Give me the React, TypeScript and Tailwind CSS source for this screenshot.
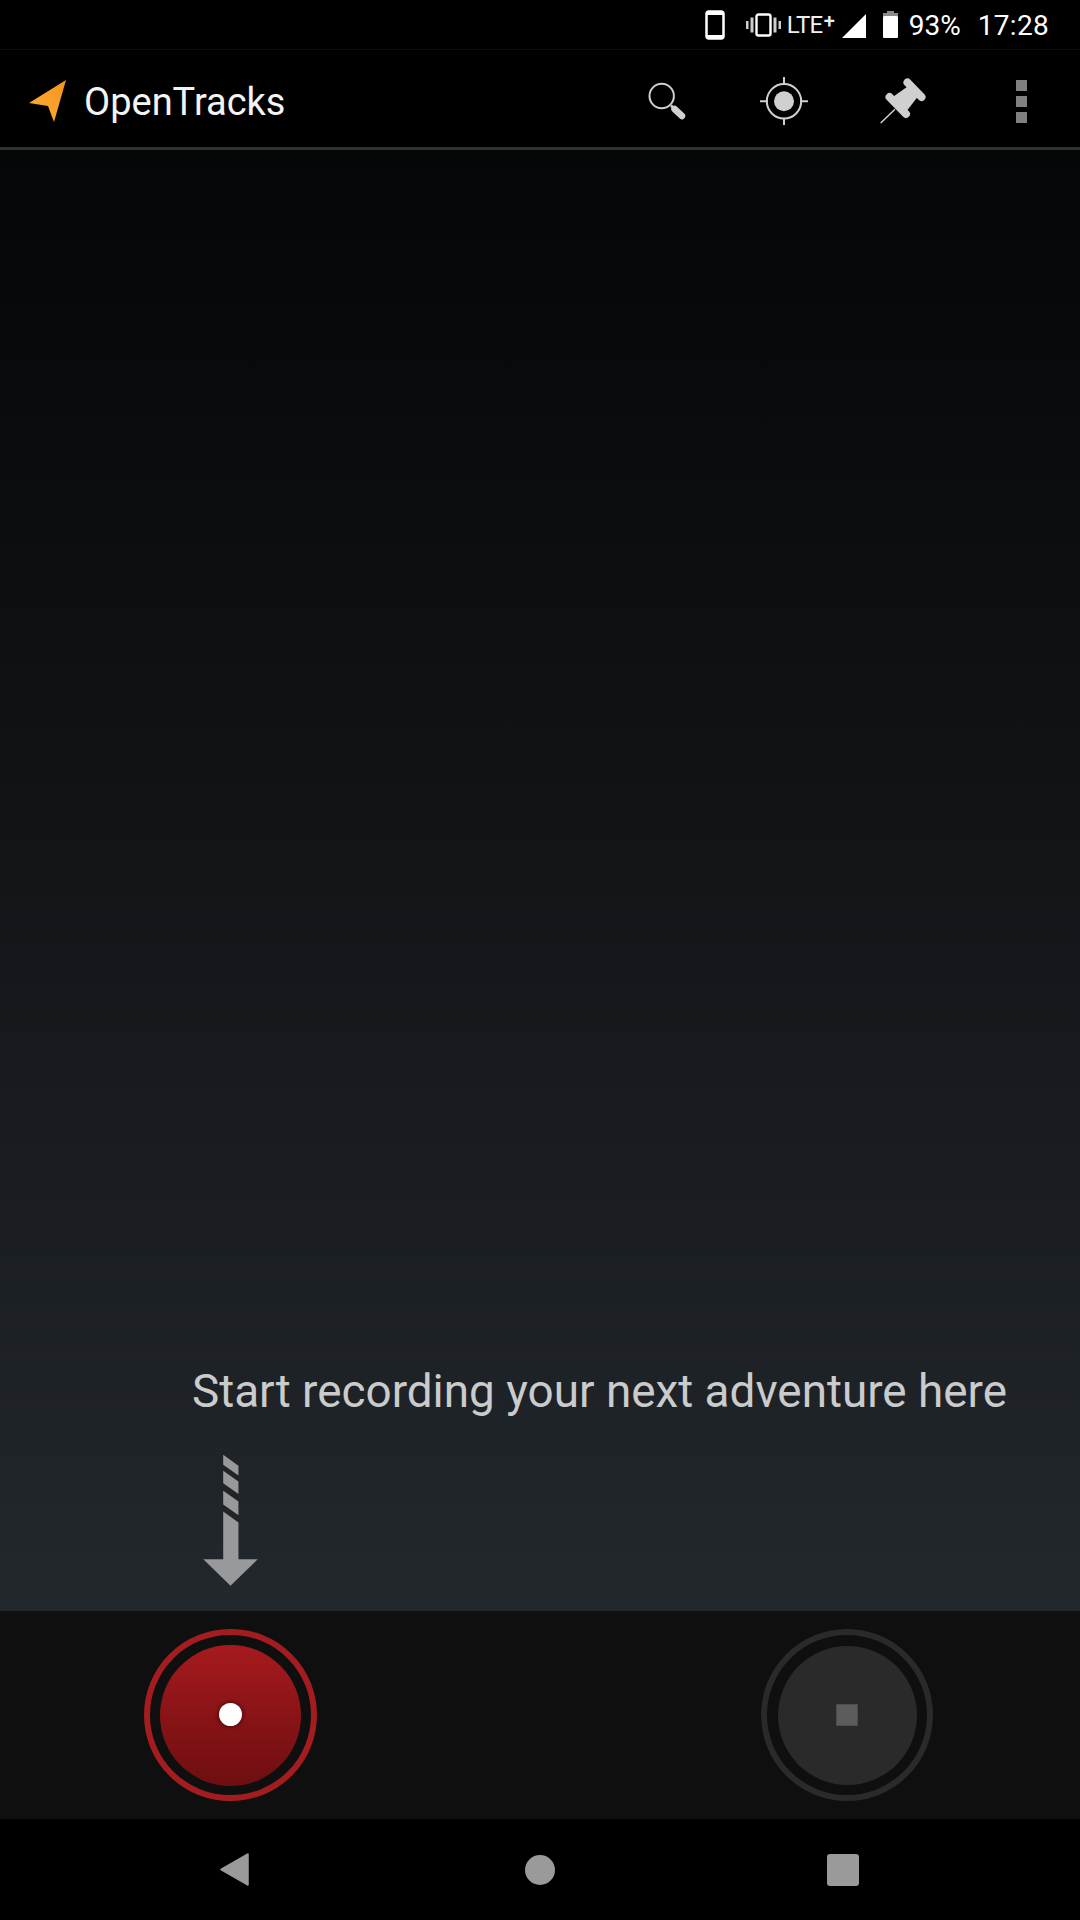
export default function App() {
  return (
    <div className="w-[1080px] h-[1920px] flex flex-col bg-black font-['Roboto',sans-serif] overflow-hidden">
      {/* Status bar */}
      <div className="h-[50px] flex items-center pr-[31px] text-white border-b border-[#0c0c0c]">
        <div className="ml-auto flex items-center">
          <svg width="20" height="30" viewBox="0 0 20 30">
            <rect x="1.5" y="1.5" width="17" height="27" rx="2.5" fill="none" stroke="#fff" strokeWidth="2.5" />
            <rect x="2" y="2" width="16" height="3" fill="#fff" />
            <rect x="2" y="25" width="16" height="3" fill="#fff" />
          </svg>
          <svg className="ml-[21px]" width="35" height="24" viewBox="0 0 35 24">
            <rect x="0" y="8" width="2.5" height="8" fill="#ccc" />
            <rect x="4.5" y="4.5" width="3" height="15" fill="#ccc" />
            <rect x="10.5" y="1.5" width="14" height="21" rx="2" fill="none" stroke="#fff" strokeWidth="2.4" />
            <rect x="27.5" y="4.5" width="3" height="15" fill="#ccc" />
            <rect x="32.5" y="8" width="2.5" height="8" fill="#ccc" />
          </svg>
          <span className="ml-[6px] w-[47px] flex items-start text-[24px] leading-none tracking-[-0.6px] mt-[1px] text-[#f0f0f0]">
            LTE
            <span className="ml-[1px] text-[20px] leading-[16px] font-medium">+</span>
          </span>
          <svg className="ml-[8px] mt-[2px]" width="24" height="24" viewBox="0 0 24 24">
            <polygon points="24,0 24,24 0,24" fill="#fff" />
          </svg>
          <svg className="ml-[17px]" width="15" height="27" viewBox="0 0 15 27">
            <rect x="4" y="0" width="7" height="3" fill="#8a8a8a" />
            <rect x="0" y="2" width="15" height="3" fill="#8a8a8a" />
            <rect x="0" y="5" width="15" height="22" rx="1" fill="#fff" />
          </svg>
          <span className="ml-[11px] mt-[3px] text-[28px] leading-none">93%</span>
          <span className="ml-[17px] mt-[3px] text-[28px] leading-none tracking-[0.3px]">17:28</span>
        </div>
      </div>

      {/* Action bar */}
      <div className="h-[97px] flex items-center pl-[29px] pr-[36px]">
        <svg className="mt-[6px]" width="38" height="43" viewBox="29 80 38 43">
          <defs>
            <linearGradient id="nav" x1="0" y1="1" x2="1" y2="0">
              <stop offset="0" stopColor="#fbb034" />
              <stop offset="1" stopColor="#f7931e" />
            </linearGradient>
          </defs>
          <polygon points="29,103 66,80 54,122 48,106" fill="url(#nav)" />
        </svg>
        <span className="ml-[17px] mt-[6px] text-[38px] leading-none text-[#f4f4f4]">OpenTracks</span>

        <div className="ml-auto flex items-center pt-[5px]">
          <svg width="48" height="48" viewBox="644 76 48 48">
            <circle cx="661.7" cy="95" r="12.2" fill="none" stroke="#d0d0d0" strokeWidth="2" />
            <line x1="671" y1="104.5" x2="674" y2="107.5" stroke="#d0d0d0" strokeWidth="2.5" />
            <line x1="674.5" y1="108" x2="682" y2="115" stroke="#d0d0d0" strokeWidth="6.5" strokeLinecap="round" />
          </svg>
          <svg className="ml-[68px]" width="48" height="48" viewBox="760 76 48 48">
            <circle cx="784" cy="100.3" r="17.2" fill="none" stroke="#d0d0d0" strokeWidth="2" />
            <circle cx="784" cy="100.3" r="10" fill="#d0d0d0" />
            <path d="M784 76v8M784 117v8M760 100.3h8M800 100.3h8" stroke="#d0d0d0" strokeWidth="2" />
          </svg>
          <svg className="ml-[70px]" width="48" height="48" viewBox="878 76 48 48">
            <line x1="895" y1="108.3" x2="880.7" y2="122" stroke="#d0d0d0" strokeWidth="1.5" />
            <polygon points="908.3,85 918.3,95 906.7,110 891.7,96.7" fill="#d0d0d0" />
            <line x1="907.5" y1="81.5" x2="921.5" y2="96" stroke="#d0d0d0" strokeWidth="8" strokeLinecap="round" />
            <line x1="889.5" y1="96" x2="906" y2="113" stroke="#d0d0d0" strokeWidth="8" strokeLinecap="round" />
          </svg>
          <div className="ml-[90px] flex flex-col gap-[5px] mr-[17px]">
            <div className="w-[11px] h-[11px] bg-[#808080]" />
            <div className="w-[11px] h-[11px] bg-[#808080]" />
            <div className="w-[11px] h-[11px] bg-[#808080]" />
          </div>
        </div>
      </div>
      <div className="h-[3px] bg-[#2e3130]" />

      {/* Main */}
      <div className="h-[1461px] flex flex-col justify-end bg-gradient-to-b from-[#050607] to-[#23282d]">
        <p className="self-end pr-[73px] text-[45.85px] leading-none text-[#c9cbcc]">
          Start recording your next adventure here
        </p>
        <svg className="mt-[37px] mb-[22px] ml-[200px]" width="61" height="137" viewBox="210 35 184 410">
          <g fill="#97999b">
            <polygon points="280,42 326,75 326,104 280,72" />
            <polygon points="280,90 326,122 326,160 280,128" />
            <polygon points="280,150 326,183 326,224 280,192" />
            <polygon points="280,213 326,246 326,357 384,357 302,437 220,357 280,357" />
          </g>
        </svg>
      </div>

      {/* Record and stop */}
      <div className="h-[208px] bg-[#0f0f0f] flex items-center justify-between pl-[144px] pr-[147px]">
        <div className="w-[173px] h-[172px] rounded-full border-[6px] border-[#a31c20] flex items-center justify-center">
          <div className="w-[141px] h-[141px] rounded-full bg-gradient-to-b from-[#a61a1e] to-[#6e0e10] flex items-center justify-center">
            <div className="w-[23px] h-[23px] mb-[2px] rounded-full bg-white shadow-[0_0_3px_2px_rgba(70,10,10,0.6)]" />
          </div>
        </div>
        <div className="w-[172px] h-[172px] rounded-full border-[6px] border-[#2a2a2a] flex items-center justify-center">
          <div className="w-[139px] h-[139px] rounded-full bg-[#2a2a2a] flex items-center justify-center">
            <div className="w-[22px] h-[22px] bg-[#5c5c5c] border border-[#4c4c4c]" />
          </div>
        </div>
      </div>

      {/* Navigation bar */}
      <div className="flex-1 bg-black flex items-center pl-[220px]">
        <svg width="29" height="33" viewBox="0 0 29 33">
          <path d="M28 1 L1 16.5 L28 32 Z" fill="#9a9a9a" stroke="#9a9a9a" strokeWidth="1.5" strokeLinejoin="round" />
        </svg>
        <div className="ml-[276px] w-[30px] h-[30px] rounded-full bg-[#9a9a9a]" />
        <div className="ml-[272px] w-[32px] h-[32px] rounded-[3px] bg-[#9a9a9a]" />
      </div>
    </div>
  );
}
